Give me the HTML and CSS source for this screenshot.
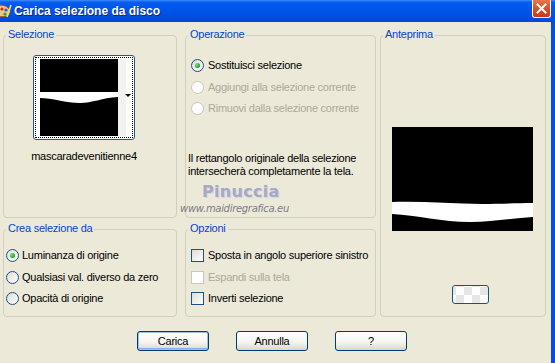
FILE: index.html
```html
<!DOCTYPE html>
<html lang="it">
<head>
    <meta charset="UTF-8">
    <meta name="viewport" content="width=device-width, initial-scale=1.0">
    <title>Carica selezione da disco</title>
    <link rel="stylesheet" href="styles.css">
</head>
<body>
    <div class="window">
        <div class="titlebar">
            <svg class="app-icon" width="12" height="16" viewBox="0 0 12 16">
                <path d="M-4 3 C2 1 9 3 10 8 C11 13 4 15 -4 13 Z" fill="#e9c98a" stroke="#8a5a2a" stroke-width="1"/>
                <circle cx="2" cy="6" r="1.6" fill="#d42a1c"/>
                <circle cx="6" cy="7" r="1.6" fill="#2a5fd8"/>
                <circle cx="5" cy="11" r="1.6" fill="#2fa52f"/>
                <path d="M7 14 L11 2" stroke="#f5e36a" stroke-width="1.6"/>
            </svg>
            <span class="title">Carica selezione da disco</span>
            <span class="close">
                <svg width="11" height="11" viewBox="0 0 11 11">
                    <path d="M1.5 1.5 L9.5 9.5 M9.5 1.5 L1.5 9.5" stroke="#fff" stroke-width="2" stroke-linecap="square"/>
                </svg>
            </span>
        </div>

        <div class="client">
            <div class="groups">
                <div class="group group-sel">
                    <span class="legend">Selezione</span>
                    <div class="thumb-wrap">
                        <div class="thumb">
                            <div class="thumb-focus">
                                <svg class="thumb-img" width="78" height="77" viewBox="0 0 78 77" preserveAspectRatio="none">
                                    <rect width="78" height="77" fill="#000"/>
                                    <path d="M0 33 L78 33 L78 38 C62 39 52 44 40 44 C26 44 12 39 0 39 Z" fill="#fff"/>
                                </svg>
                                <div class="thumb-strip"></div>
                                <span class="thumb-arrow"></span>
                            </div>
                        </div>
                        <div class="thumb-name">mascaradevenitienne4</div>
                    </div>
                </div>

                <div class="group group-op">
                    <span class="legend">Operazione</span>
                    <div class="option-list">
                        <label class="option"><span class="radio checked"></span>Sostituisci selezione</label>
                        <label class="option disabled"><span class="radio"></span>Aggiungi alla selezione corrente</label>
                        <label class="option disabled"><span class="radio"></span>Rimuovi dalla selezione corrente</label>
                    </div>
                    <p class="note">Il rettangolo originale della selezione<br>intersecherà completamente la tela.</p>
                </div>

                <div class="group group-prev">
                    <span class="legend">Anteprima</span>
                    <svg class="preview" width="141" height="104" viewBox="0 0 141 104">
                        <rect width="141" height="104" fill="#000"/>
                        <path d="M0 75 C30 74 60 77 90 77 C110 77 125 76 141 76 L141 90 C120 91 100 95 78 95 C50 95 25 88 0 87 Z" fill="#fff"/>
                    </svg>
                    <span class="swatch"></span>
                </div>

                <div class="group group-crea">
                    <span class="legend">Crea selezione da</span>
                    <div class="option-list">
                        <label class="option"><span class="radio checked"></span>Luminanza di origine</label>
                        <label class="option"><span class="radio"></span>Qualsiasi val. diverso da zero</label>
                        <label class="option"><span class="radio"></span>Opacità di origine</label>
                    </div>
                </div>

                <div class="group group-opz">
                    <span class="legend">Opzioni</span>
                    <div class="option-list">
                        <label class="option"><span class="check"></span>Sposta in angolo superiore sinistro</label>
                        <label class="option disabled"><span class="check"></span>Espandi sulla tela</label>
                        <label class="option"><span class="check"></span>Inverti selezione</label>
                    </div>
                </div>
            </div>

            <div class="buttons">
                <button class="btn default">Carica</button>
                <button class="btn">Annulla</button>
                <button class="btn">?</button>
            </div>

            <div class="watermark">
                <span class="wm-name">Pinuccia</span>
                <span class="wm-site">www.maidiregrafica.eu</span>
            </div>
        </div>
    </div>
</body>
</html>
```

FILE: styles.css
```css
body {
    margin: 0;
    font-family: "Liberation Sans", Arial, sans-serif;
    font-size: 11px;
    letter-spacing: -0.25px;
    color: #000;
    background: #ece9d8;
}

.window {
    width: 555px;
    height: 363px;
    display: flex;
    flex-direction: column;
    overflow: hidden;
}

/* title bar */
.titlebar {
    height: 22px;
    flex: none;
    display: flex;
    align-items: center;
    background: linear-gradient(#3d8ef7 0, #0a5ef0 2px, #0058ee 5px, #0052e6 60%, #0047d6 100%);
    position: relative;
}

.app-icon {
    flex: none;
}

.title {
    margin-left: 2px;
    color: #fff;
    font-weight: bold;
    font-size: 12px;
    letter-spacing: 0;
    text-shadow: 1px 1px 0 #0a2a8a;
}

.close {
    position: absolute;
    right: 4px;
    top: 0;
    width: 19px;
    height: 18px;
    box-sizing: border-box;
    border: 1px solid #fff;
    border-top: none;
    border-radius: 0 0 3px 3px;
    background: linear-gradient(#e9754d, #d94a22 60%, #c9391a);
    display: flex;
    align-items: center;
    justify-content: center;
}

/* client area */
.client {
    flex: 1;
    position: relative;
    border-right: 4px solid #0a4ddc;
}

.groups {
    display: grid;
    grid-template-columns: 182px 195px 166px;
    grid-template-rows: 183px 88px;
    grid-template-areas:
        "sel op prev"
        "crea opz prev";
    row-gap: 11px;
    padding: 13px 0 0 3px;
}

.group {
    position: relative;
    border: 1px solid #d0d0bf;
    border-radius: 4px;
    box-sizing: border-box;
}

.legend {
    position: absolute;
    top: -8px;
    left: 2px;
    padding: 0 2px;
    background: #ece9d8;
    color: #0046d5;
    line-height: 13px;
}

.group-sel { grid-area: sel; margin-right: 8px; }
.group-op { grid-area: op; margin-right: 4px; }
.group-prev { grid-area: prev; }
.group-crea { grid-area: crea; margin-right: 8px; }
.group-opz { grid-area: opz; margin-right: 4px; }

/* selection thumbnail */
.thumb-wrap {
    width: 102px;
    margin: 19px 0 0 29px;
    display: flex;
    flex-direction: column;
    align-items: center;
}

.thumb {
    width: 102px;
    height: 85px;
    box-sizing: border-box;
    border: 1px solid #2b5687;
    border-radius: 3px;
    padding: 1px;
    background: #fff;
}

.thumb-focus {
    position: relative;
    height: 100%;
    box-sizing: border-box;
    border: 1px dotted #000;
    padding: 1px 0 1px 4px;
    display: flex;
}

.thumb-img {
    display: block;
    width: 78px;
    height: 100%;
}

.thumb-strip {
    width: 8px;
    background: #f2f2f0;
}

.thumb-arrow {
    position: absolute;
    right: 1px;
    top: 36px;
    border-left: 3px solid transparent;
    border-right: 3px solid transparent;
    border-top: 3px solid #000;
}

.thumb-name {
    margin-top: 10px;
    line-height: 13px;
    white-space: nowrap;
}

/* radios and checkboxes */
.option-list {
    display: flex;
    flex-direction: column;
    gap: 8.5px;
}

.option {
    display: flex;
    align-items: center;
    gap: 4px;
    height: 13px;
    line-height: 13px;
    white-space: nowrap;
}

.option.disabled {
    color: #aca899;
}

.radio {
    width: 13px;
    height: 13px;
    box-sizing: border-box;
    border-radius: 50%;
    border: 1px solid #1c5180;
    background: linear-gradient(135deg, #dcdcd7, #fff);
    display: flex;
    align-items: center;
    justify-content: center;
    flex: none;
}

.radio.checked::after {
    content: "";
    width: 5px;
    height: 5px;
    border-radius: 50%;
    background: radial-gradient(circle at 35% 35%, #7be07b, #21a121 70%);
}

.option.disabled .radio,
.option.disabled .check {
    border-color: #cac8bb;
    background: #fff;
}

.check {
    width: 13px;
    height: 13px;
    box-sizing: border-box;
    border: 1px solid #1c5180;
    background: linear-gradient(135deg, #dcdcd7, #fff);
    flex: none;
}

.group-op {
    padding: 23px 0 0 5px;
}

.note {
    margin: 37px 0 0 -3px;
    line-height: 13px;
}

.group-crea {
    padding: 19px 0 0 2px;
}

.group-crea .option {
    gap: 3px;
}

.group-opz {
    padding: 19px 0 0 5px;
}

/* preview */
.group-prev {
    display: flex;
    flex-direction: column;
}

.preview {
    display: block;
    margin: 91px 0 0 11px;
}

.swatch {
    width: 37px;
    height: 19px;
    box-sizing: border-box;
    margin: 54px 0 0 71px;
    border: 1px solid #1c5180;
    border-radius: 3px;
    background-color: #fff;
    background-image: conic-gradient(#e6e6e6 25%, #fff 0 50%, #e6e6e6 0 75%, #fff 0);
    background-size: 16px 16px;
    background-position: 3px 1px;
}

/* buttons */
.buttons {
    display: flex;
    gap: 27px;
    padding: 14px 0 0 137px;
}

.btn {
    width: 72px;
    height: 20px;
    padding: 0;
    font-family: "Liberation Sans", Arial, sans-serif;
    font-size: 11px;
    letter-spacing: -0.25px;
    color: #000;
    border: 1px solid #003c74;
    border-radius: 3px;
    background: linear-gradient(#fff, #f3f3ef 60%, #d8d6cc);
}

.btn.default {
    box-shadow: inset 0 0 0 1px #9fc1f0, inset 0 -1px 0 1px #89aee8;
}

/* watermark */
.watermark {
    position: absolute;
    left: 177px;
    top: 160px;
    display: flex;
    flex-direction: column;
    align-items: flex-start;
}

.wm-name {
    margin-left: 25px;
    font-family: "DejaVu Sans", sans-serif;
    font-weight: bold;
    font-size: 16px;
    letter-spacing: 0.3px;
    color: #a7a8c6;
    text-shadow: 1px 1px 0 #d4d4e2;
    line-height: 20px;
}

.wm-site {
    margin-left: 3px;
    font-family: "DejaVu Sans", sans-serif;
    font-size: 10px;
    font-style: italic;
    color: #7c7c86;
    line-height: 14px;
    letter-spacing: -0.3px;
}
```
